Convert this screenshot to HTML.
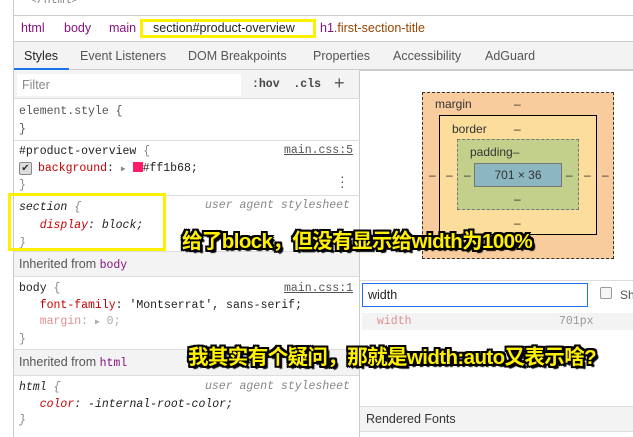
<!DOCTYPE html><html><head><meta charset="utf-8"><style>
*{margin:0;padding:0;box-sizing:border-box}
body{width:633px;height:437px;overflow:hidden;background:#fff;font-family:"Liberation Sans","DejaVu Sans",sans-serif;font-size:12px;color:#333;position:relative}
.a{position:absolute}
.mono{font-family:"Liberation Mono","DejaVu Sans Mono",monospace;font-size:11.5px}
.sep{position:absolute;left:14px;width:346px;height:1px;background:#ddd}
.ol{font-family:"Liberation Sans","Noto Sans CJK SC",sans-serif;font-weight:bold;font-size:20.5px;color:#ffef00;text-shadow:-2px -2px 0 #000,2px -2px 0 #000,-2px 2px 0 #000,2px 2px 0 #000,0 2px 0 #000,0 -2px 0 #000,2px 0 0 #000,-2px 0 0 #000,3px 3px 1px #000;white-space:nowrap;letter-spacing:-0.6px}
</style></head><body>
<div class="a" style="left:13px;top:0;width:1px;height:437px;background:#ccc"></div>
<div class="a mono" style="left:30px;top:-6px;color:#888">&lt;/html&gt;</div>
<div class="a" style="left:14px;top:15px;width:619px;height:1px;background:#ccc"></div>
<div class="a" style="left:14px;top:16px;width:619px;height:25px;font-size:12.5px;line-height:25px">
<span class="a" style="left:7px;color:#881280">html</span>
<span class="a" style="left:50px;color:#881280">body</span>
<span class="a" style="left:95px;color:#881280">main</span>
<span class="a" style="left:139px;color:#222">section#product-overview</span>
<span class="a" style="left:306px;color:#881280">h1<span style="color:#994500">.first-section-title</span></span>
</div>
<div class="a" style="left:140px;top:19px;width:176px;height:19px;border:3px solid #ffef00"></div>
<div class="a" style="left:14px;top:41px;width:619px;height:29px;background:#f3f3f3;border-top:1px solid #ccc;border-bottom:1px solid #ccc;font-size:12.5px;line-height:28px;color:#555">
<span class="a" style="left:10px;color:#222">Styles</span>
<span class="a" style="left:66px">Event Listeners</span>
<span class="a" style="left:174px">DOM Breakpoints</span>
<span class="a" style="left:299px">Properties</span>
<span class="a" style="left:379px">Accessibility</span>
<span class="a" style="left:471px">AdGuard</span>
<div class="a" style="left:0;top:26px;width:55px;height:2px;background:#1a73e8"></div>
</div>
<div class="a" style="left:359px;top:70px;width:1px;height:367px;background:#ccc"></div>
<div class="a" style="left:14px;top:70px;width:345px;height:28px;background:#f3f3f3"></div>
<div class="a" style="left:17px;top:74px;width:224px;height:22px;background:#fff;color:#888;font-size:12.5px;line-height:22px;padding-left:5px">Filter</div>
<div class="a mono" style="left:252px;top:78px;font-weight:bold;color:#444">:hov&nbsp;&nbsp;.cls</div>
<div class="a" style="left:334px;top:73px;font-size:18px;color:#555">+</div>
<div class="sep" style="top:98px"></div>
<div class="a mono" style="left:19px;top:103px;line-height:18px;color:#555">element.style {<br>}</div>
<div class="sep" style="top:140px"></div>
<div class="a mono" style="left:19px;top:144px;line-height:16.5px;color:#222">#product-overview <span style="color:#888">{</span><br><span style="padding-left:19px;color:#c80000">background</span>: <span style="color:#888;font-size:8px">▶</span> <span style="display:inline-block;width:10px;height:10px;background:#ff1b68;vertical-align:-1px"></span>#ff1b68;<br><span style="color:#888">}</span></div>
<div class="a" style="left:19px;top:162px;width:13px;height:13px;border:1px solid #888;border-radius:2px;background:#ddd;font-size:10px;line-height:11px;text-align:center">✔</div>
<div class="a mono" style="left:284px;top:144px;color:#555;text-decoration:underline">main.css:5</div>
<div class="a" style="left:340px;top:174px;font-size:14px;color:#555;line-height:5px">·<br>·<br>·</div>
<div class="sep" style="top:195px"></div>
<div class="a mono" style="left:19px;top:199px;line-height:18px;font-style:italic;color:#222">section <span style="color:#888">{</span><br>&nbsp;&nbsp;&nbsp;<span style="color:#c80000">display</span>: block;<br><span style="color:#888">}</span></div>
<div class="a mono" style="left:205px;top:199px;font-style:italic;color:#888">user agent stylesheet</div>
<div class="a" style="left:8px;top:193px;width:158px;height:58px;border:3px solid #ffef00"></div>
<div class="a" style="left:14px;top:251px;width:345px;height:26px;background:#f3f3f3;border-top:1px solid #ddd;border-bottom:1px solid #ddd;line-height:24px;color:#555;padding-left:5px;font-size:12.5px">Inherited from <span class="mono" style="color:#881280">body</span></div>
<div class="a mono" style="left:19px;top:281px;line-height:16.5px;color:#222">body <span style="color:#888">{</span><br>&nbsp;&nbsp;&nbsp;<span style="color:#c80000">font-family</span>: 'Montserrat', sans-serif;<br>&nbsp;&nbsp;&nbsp;<span style="color:#e09090">margin</span><span style="color:#aaa">: <span style="font-size:8px">▶</span> 0;</span><br><span style="color:#888">}</span></div>
<div class="a mono" style="left:284px;top:282px;color:#555;text-decoration:underline">main.css:1</div>
<div class="a" style="left:14px;top:349px;width:345px;height:27px;background:#f3f3f3;border-top:1px solid #ddd;border-bottom:1px solid #ddd;line-height:25px;color:#555;padding-left:5px;font-size:12.5px">Inherited from <span class="mono" style="color:#881280">html</span></div>
<div class="a mono" style="left:19px;top:380px;line-height:16.5px;font-style:italic;color:#222">html <span style="color:#888">{</span><br>&nbsp;&nbsp;&nbsp;<span style="color:#c80000">color</span>: -internal-root-color;<br><span style="color:#888">}</span></div>
<div class="a mono" style="left:205px;top:380px;font-style:italic;color:#888">user agent stylesheet</div>
<div class="a" style="left:360px;top:70px;width:273px;height:1px;background:#ccc"></div>
<div class="a" style="left:422px;top:92px;width:192px;height:167px;background:#f9cc9d;border:1px dashed #333"></div>
<div class="a" style="left:435px;top:97px;color:#333">margin</div>
<div class="a" style="left:514px;top:97px">–</div>
<div class="a" style="left:439px;top:115px;width:158px;height:120px;background:#fddd9b;border:1px solid #000"></div>
<div class="a" style="left:452px;top:122px">border</div>
<div class="a" style="left:514px;top:122px">–</div>
<div class="a" style="left:457px;top:139px;width:122px;height:71px;background:#c3d08b;border:1px dashed #777"></div>
<div class="a" style="left:470px;top:145px">padding–</div>
<div class="a" style="left:474px;top:163px;width:88px;height:24px;background:#8cb6c0;border:1px solid #777;text-align:center;line-height:22px">701 × 36</div>
<div class="a" style="left:429px;top:168px">–</div><div class="a" style="left:446px;top:168px">–</div><div class="a" style="left:464px;top:168px">–</div>
<div class="a" style="left:566px;top:168px">–</div><div class="a" style="left:584px;top:168px">–</div><div class="a" style="left:602px;top:168px">–</div>
<div class="a" style="left:514px;top:192px">–</div>
<div class="a" style="left:514px;top:216px">–</div>
<div class="a" style="left:514px;top:240px">–</div>
<div class="a" style="left:360px;top:280px;width:273px;height:1px;background:#ddd"></div>
<div class="a" style="left:362px;top:283px;width:226px;height:24px;border:1px solid #1a73e8;padding-left:5px;line-height:22px;font-size:12.5px;color:#222">width</div>
<div class="a" style="left:600px;top:287px;width:12px;height:12px;border:1px solid #999;border-radius:2px;background:#f6f6f6"></div>
<div class="a" style="left:620px;top:288px;color:#555">Sh</div>
<div class="a" style="left:362px;top:313px;width:271px;height:17px;background:#f3f3f3"></div>
<div class="a mono" style="left:377px;top:315px;color:#e09090">width</div>
<div class="a mono" style="left:559px;top:315px;color:#999">701px</div>
<div class="a" style="left:360px;top:406px;width:273px;height:26px;background:#f3f3f3;border-top:1px solid #ddd;border-bottom:1px solid #ddd;line-height:24px;padding-left:6px;color:#333;font-size:12.5px">Rendered Fonts</div>
<div class="a ol" style="left:182px;top:224px">给了block，但没有显示给width为100%</div>
<div class="a ol" style="left:188px;top:340px">我其实有个疑问，那就是width:auto又表示啥?</div>
</body></html>
